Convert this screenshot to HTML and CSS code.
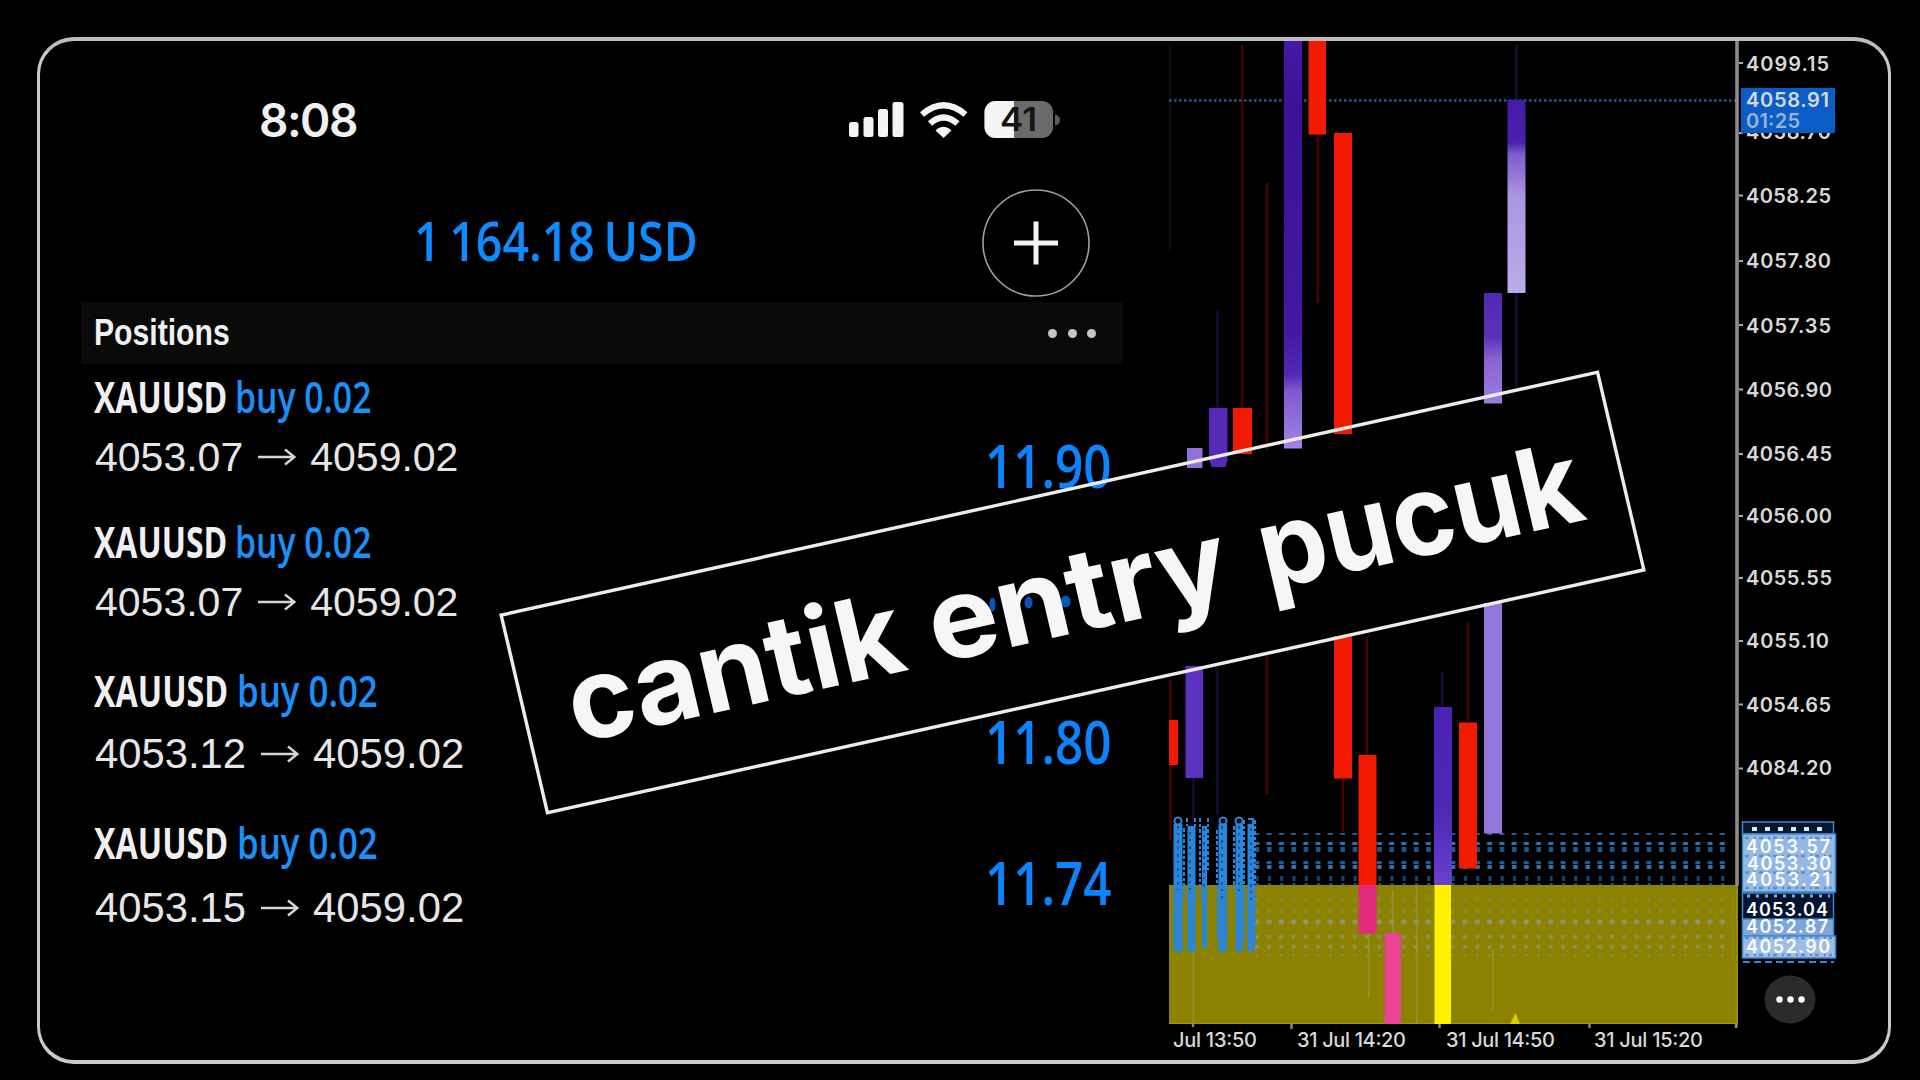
FILE: index.html
```html
<!DOCTYPE html>
<html lang="id">
<head>
<meta charset="utf-8">
<title>XAUUSD positions</title>
<link rel="stylesheet" href="styles.css">
</head>
<body>
<main class="frame">
  <section class="account">
    <div class="status">
      <span class="clock">8:08</span>
      <svg class="indicators" width="216" height="44" viewBox="848 98 216 44">
        <g fill="#f4f4f4">
          <rect x="849" y="122" width="9.5" height="15" rx="2.5"/>
          <rect x="863.5" y="117" width="10" height="20" rx="2.5"/>
          <rect x="878" y="109" width="10" height="28" rx="2.5"/>
          <rect x="892.5" y="102" width="11" height="35" rx="2.5"/>
          <path d="M935.5 130.5Q943.500 123 951.500 130.500L943.500 138Z"/>
        </g>
        <g fill="none" stroke="#f4f4f4" stroke-width="6.200">
          <path d="M922 114.500Q943.500 96 965.500 114.500"/>
          <path d="M930 123.500Q943.500 111.500 957.500 123.500"/>
        </g>
        <rect x="984.5" y="101" width="68.500" height="37" rx="11" fill="#6b6b6b"/>
        <path d="M1014 101H995.500A11 11 0 0 0 984.500 112V127A11 11 0 0 0 995.500 138H1014Z" fill="#f4f4f4"/>
        <path d="M1055 114.500Q1060 115.500 1060 120T1055 125.500Z" fill="#5c5c5c"/>
        <text x="1000" y="131" class="charge" textLength="37" lengthAdjust="spacingAndGlyphs">41</text>
      </svg>
    </div>

    <div class="balance">
      <span class="total">1 164.18 USD</span>
      <svg class="add" width="112" height="112" viewBox="-56 -56 112 112">
        <circle r="53" fill="none" stroke="#a0a0a0" stroke-width="1.600"/>
        <path d="M-22 0H22M0-21.500V21.500" stroke="#f4f4f4" stroke-width="5"/>
      </svg>
    </div>

    <header class="bar">
      <h1>Positions</h1>
      <span class="dots"><i></i><i></i><i></i></span>
    </header>

    <ul class="positions">
      <li class="position first">
        <div class="deal"><b>XAUUSD</b><em>buy 0.02</em></div>
        <div class="prices"><span>4053.07</span><svg width="38" height="18" viewBox="0 0 38 18"><path d="M0 9H36M27 1.500L36.500 9L27 16.500"/></svg><span>4059.02</span></div>
        <strong class="profit">11.90</strong>
      </li>
      <li class="position second">
        <div class="deal"><b>XAUUSD</b><em>buy 0.02</em></div>
        <div class="prices"><span>4053.07</span><svg width="38" height="18" viewBox="0 0 38 18"><path d="M0 9H36M27 1.500L36.500 9L27 16.500"/></svg><span>4059.02</span></div>
      </li>
      <li class="position third">
        <div class="deal"><b>XAUUSD</b><em>buy 0.02</em></div>
        <div class="prices"><span>4053.12</span><svg width="38" height="18" viewBox="0 0 38 18"><path d="M0 9H36M27 1.500L36.500 9L27 16.500"/></svg><span>4059.02</span></div>
        <strong class="profit">11.80</strong>
      </li>
      <li class="position fourth">
        <div class="deal"><b>XAUUSD</b><em>buy 0.02</em></div>
        <div class="prices"><span>4053.15</span><svg width="38" height="18" viewBox="0 0 38 18"><path d="M0 9H36M27 1.500L36.500 9L27 16.500"/></svg><span>4059.02</span></div>
        <strong class="profit">11.74</strong>
      </li>
    </ul>
  </section>

  <svg class="chart" width="749" height="1019" viewBox="1140 41 749 1019">
    <defs>
      <linearGradient id="tall" gradientUnits="userSpaceOnUse" x1="0" y1="41" x2="0" y2="448">
        <stop offset="0" stop-color="#4519a6"/><stop offset=".17" stop-color="#3a1294"/><stop offset=".72" stop-color="#4319a4"/><stop offset=".82" stop-color="#5229b8"/><stop offset=".86" stop-color="#8059ce"/><stop offset="1" stop-color="#a084e6"/>
      </linearGradient>
      <linearGradient id="last" gradientUnits="userSpaceOnUse" x1="0" y1="100" x2="0" y2="293">
        <stop offset="0" stop-color="#451ba4"/><stop offset=".22" stop-color="#4a1fae"/><stop offset=".28" stop-color="#7d5ccc"/><stop offset=".5" stop-color="#ab96e0"/><stop offset="1" stop-color="#bbabe8"/>
      </linearGradient>
      <linearGradient id="mid" gradientUnits="userSpaceOnUse" x1="0" y1="293" x2="0" y2="404">
        <stop offset="0" stop-color="#5227b2"/><stop offset=".4" stop-color="#5b33ba"/><stop offset=".6" stop-color="#8765d0"/><stop offset="1" stop-color="#9b7de2"/>
      </linearGradient>
      <linearGradient id="low" x1="0" y1="0" x2="0" y2="1">
        <stop offset="0" stop-color="#4b22b4"/><stop offset=".6" stop-color="#4f28b6"/><stop offset="1" stop-color="#6840cc"/>
      </linearGradient>
      <pattern id="levels" patternUnits="userSpaceOnUse" x="1265" y="830" width="12.250" height="56">
        <g fill="#2674ba">
          <rect x="1.500" y="3" width="5" height="2" opacity=".8"/><rect x="1.500" y="12" width="5" height="3"/><rect x="2" y="17" width="4.500" height="5" opacity=".75"/>
          <rect x="1.500" y="31" width="5" height="3" opacity=".8"/><rect x="2" y="35" width="4.500" height="4"/><rect x="3" y="46" width="3" height="5" opacity=".6"/><rect x="3" y="53" width="3" height="2" opacity=".7"/>
        </g>
      </pattern>
      <pattern id="levels-zone" patternUnits="userSpaceOnUse" x="1265" y="886" width="12.250" height="74">
        <g fill="#8d9468">
          <circle cx="4" cy="13" r="2" opacity=".4"/><circle cx="4" cy="25" r="2" opacity=".5"/><circle cx="4" cy="36" r="2.700"/><circle cx="4" cy="51" r="2.300" opacity=".8"/><circle cx="4" cy="61" r="2.300" opacity=".8"/><circle cx="4" cy="69" r="1.600" opacity=".6"/>
        </g>
      </pattern>
    </defs>

    <!-- price zone -->
    <rect x="1169" y="885" width="569" height="139" fill="#8a8200"/>
    <path d="M1169 1023.500H1738" stroke="#a39b00" stroke-width="1"/>
    <rect x="1253" y="830" width="477" height="55" fill="url(#levels)"/>
    <rect x="1253" y="886" width="477" height="73" fill="url(#levels-zone)"/>

    <!-- wicks -->
    <g stroke-width="2.500">
      <path stroke="#0c0c0c" d="M1170 45V250"/>
      <path stroke="#4a0300" d="M1242 45V408M1267 183V450M1267 655V794M1318 134V303M1170.500 680V840M1343 778V832M1367 637V755M1468 622V722"/>
      <path stroke="#170d3a" d="M1217.500 311V408M1217.500 668V815M1516.500 44V100M1516.500 293V392M1193.500 778V820M1442 672V707"/>
      <path stroke="#9a953c" stroke-width="2" opacity=".7" d="M1193.500 951V1023M1369 933V998M1417 886V1023M1493 950V1010M1393 890V933"/>
    </g>

    <path d="M1169 100.500H1736" stroke="#1d5d9c" stroke-width="2.500" stroke-dasharray="2.500 2.500"/>

    <!-- candles -->
    <g fill="#f21a00">
      <rect x="1233" y="408" width="19" height="46"/>
      <rect x="1308.500" y="41" width="17.500" height="93.500"/>
      <rect x="1334" y="133" width="18" height="301"/>
      <rect x="1334" y="636" width="18" height="142.500"/>
      <rect x="1169" y="720" width="9" height="45"/>
      <rect x="1358.500" y="755" width="18" height="130"/>
      <rect x="1459" y="722.500" width="18" height="146"/>
    </g>
    <rect x="1358.500" y="885" width="18" height="48.500" fill="#e22a7c"/>
    <rect x="1384.500" y="933" width="16.500" height="91" fill="#ec4494"/>
    <rect x="1187" y="448" width="15.500" height="20" fill="#9270da"/>
    <rect x="1185.500" y="666" width="17.500" height="112" fill="#5c32c0"/>
    <path d="M1209 408H1227.500V460L1225.500 467H1212L1209 460Z" fill="#5729b8"/>
    <rect x="1284" y="41" width="18" height="407.500" fill="url(#tall)"/>
    <rect x="1434" y="707" width="18" height="178" fill="url(#low)"/>
    <rect x="1434.500" y="885" width="16.500" height="139" fill="#fff200"/>
    <rect x="1484" y="293" width="18" height="110.500" fill="url(#mid)"/>
    <rect x="1484" y="603" width="18" height="230.500" fill="#9476dc"/>
    <rect x="1507.500" y="100" width="18" height="193" fill="url(#last)"/>
    <path d="M1510 1024L1515.500 1013L1520 1024Z" fill="#d8d000"/>

    <!-- stacked order labels -->
    <g fill="#2a86da">
      <rect x="1173.500" y="824" width="9" height="127.500"/><rect x="1187.500" y="826" width="8" height="125.500"/><rect x="1202" y="826" width="5" height="122"/>
      <rect x="1218.500" y="824" width="8.500" height="127.500"/><rect x="1235.500" y="824" width="7.500" height="127.500"/><rect x="1247.500" y="824" width="6.500" height="127.500"/>
    </g>
    <g fill="none" stroke="#2a86da" stroke-width="2">
      <circle cx="1178" cy="821" r="3.500"/><circle cx="1223" cy="821" r="3.500"/><circle cx="1239" cy="821" r="3.500"/>
      <path stroke-dasharray="4 2 3 2" d="M1184 828V900M1187 818V826M1195 818V826M1200 818V900M1208 818V870M1217 830V940M1234 826V890M1244 820V940M1255 820V945"/>
      <path d="M1248 819H1253V824"/>
    </g>
    <g fill="none" stroke="#0e2c52" stroke-width="1.500" stroke-dasharray="3 4 2 5" opacity=".7">
      <path d="M1178 826V890M1190 832V890M1204 828V890M1222 826V900M1239 826V895M1251 828V900"/>
    </g>

    <!-- axes -->
    <path d="M1737 41V886" stroke="#8c8c8c" stroke-width="3.600"/>
    <path d="M1737 886V1027" stroke="#9a9300" stroke-width="1.500"/>
    <path d="M1739 63H1743M1739 133H1743M1739 195.500H1743M1739 261H1743M1739 325H1743M1739 389.500H1743M1739 454H1743M1739 516H1743M1739 578H1743M1739 641H1743M1739 704.500H1743M1739 768.500H1743" stroke="#aaa" stroke-width="2"/>
    <path d="M1193 1024V1027M1291.500 1024V1029M1439.500 1024V1028M1589.500 1024V1028M1736 1024V1028" stroke="#888" stroke-width="2.500"/>

    <g class="axis">
      <text x="1746" y="70.500" textLength="83">4099.15</text>
      <text x="1746" y="138.500" textLength="85">4058.70</text>
      <text x="1746" y="203" textLength="85">4058.25</text>
      <text x="1746" y="268" textLength="85">4057.80</text>
      <text x="1746" y="332.500" textLength="85">4057.35</text>
      <text x="1746" y="396.500" textLength="86">4056.90</text>
      <text x="1746" y="460.500" textLength="86">4056.45</text>
      <text x="1746" y="523" textLength="86">4056.00</text>
      <text x="1746" y="585" textLength="86">4055.55</text>
      <text x="1746" y="648" textLength="83">4055.10</text>
      <text x="1746" y="711.500" textLength="85">4054.65</text>
      <text x="1746" y="775" textLength="86">4084.20</text>
    </g>
    <g class="axis dates">
      <text x="1173" y="1047" textLength="84">Jul 13:50</text>
      <text x="1297" y="1047" textLength="109">31 Jul 14:20</text>
      <text x="1446" y="1047" textLength="109">31 Jul 14:50</text>
      <text x="1594" y="1047" textLength="109">31 Jul 15:20</text>
    </g>

    <!-- current price -->
    <rect x="1741" y="88" width="94" height="45" fill="#0a5cc6"/>
    <g class="axis">
      <text x="1746" y="106.500" textLength="83">4058.91</text>
      <text x="1746" y="127.500" textLength="54" opacity=".7">01:25</text>
    </g>

    <!-- piled order price tags -->
    <g stroke="#3a86d0" stroke-width="1.500">
      <rect x="1742.500" y="822" width="91" height="12" fill="#051830"/>
      <rect x="1742.500" y="893" width="91" height="28" fill="#04142c"/>
      <rect x="1742.500" y="834" width="93" height="58" fill="#94b8e2"/>
      <rect x="1742.500" y="919" width="91" height="17" fill="#7ea6d8"/>
      <rect x="1742.500" y="936" width="93" height="22" fill="#9dbde6"/>
    </g>
    <path d="M1743 962H1834" stroke="#3a86d0" stroke-width="2" stroke-dasharray="7 4"/>
    <path d="M1752 829H1830" stroke="#dce9fa" stroke-width="4" stroke-dasharray="5 8"/>
    <path d="M1747 896H1830" stroke="#78a7df" stroke-width="3" stroke-dasharray="3 6"/>
    <path d="M1745 856H1832M1745 872.500H1832M1745 838H1832M1745 888H1832M1745 938H1832M1745 955H1832" stroke="#4b85c9" stroke-width="2.500" stroke-dasharray="4 5 2 3" opacity=".8"/>
    <g class="axis pile">
      <text x="1746" y="853" textLength="84">4053.57</text>
      <text x="1747" y="869.500" textLength="84">4053.30</text>
      <text x="1746" y="886" textLength="84">4053.21</text>
      <text x="1746" y="916" textLength="82">4053.04</text>
      <text x="1746" y="932.500" textLength="82">4052.87</text>
      <text x="1746" y="953" textLength="84">4052.90</text>
    </g>

    <ellipse cx="1790" cy="999.500" rx="25.500" ry="24" fill="#2b2b2b"/>
    <g fill="#fff"><circle cx="1779.500" cy="999.500" r="3.200"/><circle cx="1790.500" cy="999.500" r="3.200"/><circle cx="1801.500" cy="999.500" r="3.200"/></g>
  </svg>

  <svg class="stamp" width="1127" height="207" viewBox="-563.500 -103.500 1127 207">
    <rect x="-561.500" y="-101.500" width="1123" height="203" fill="none" stroke="#ececec" stroke-width="3.400"/>
    <g fill="#0757b8" transform="rotate(12.500)">
      <ellipse cx="-80" cy="12" rx="3" ry="7"/><ellipse cx="-44" cy="10" rx="4" ry="6"/><ellipse cx="-7" cy="9" rx="5" ry="6"/><ellipse cx="22" cy="8" rx="3" ry="4" opacity=".6"/>
    </g>
    <text x="-517" y="40" textLength="341" lengthAdjust="spacingAndGlyphs">cantik</text>
    <text x="-148" y="40" textLength="305" lengthAdjust="spacingAndGlyphs">entry</text>
    <text x="191" y="40" textLength="328" lengthAdjust="spacingAndGlyphs">pucuk</text>
  </svg>
</main>
</body>
</html>
```

FILE: styles.css
```css
* { box-sizing: border-box; }

body {
  margin: 0;
  padding: 37px;
  width: 1920px;
  height: 1080px;
  overflow: hidden;
  background: #000;
  color: #f0f0f0;
  font-family: "Open Sans", "Noto Sans", sans-serif;
}

.frame {
  position: relative;
  display: grid;
  grid-template-columns: 1100px 748px;
  width: 1854px;
  height: 1027px;
  border: 3px solid #c9cbc9;
  border-top: 4px solid #b7bfb8;
  border-bottom-width: 4px;
  border-radius: 37px;
  overflow: hidden;
}

.account { padding: 39px 17px 0 41px; }

.status {
  display: flex;
  align-items: center;
  height: 80px;
  padding-left: 178px;
}

.clock {
  width: 589px;
  font: 600 46px/80px Inter, sans-serif;
  letter-spacing: -1.5px;
}

.charge { font: 600 32px Inter, sans-serif; fill: #151515; }

.balance {
  display: flex;
  align-items: flex-start;
  height: 142px;
  padding: 27px 0 0 333px;
}

.total {
  width: 566px;
  color: #0d8bff;
  font-size: 54.5px;
  font-weight: 650;
  line-height: 106px;
  white-space: nowrap;
  word-spacing: -4px;
  transform: scaleX(.853);
  transform-origin: left;
}

.add { flex: none; }

.bar {
  display: flex;
  align-items: center;
  justify-content: space-between;
  height: 62px;
  padding: 0 27px 0 13px;
  background: #0a0a0a;
}

.bar h1 {
  margin: 0;
  font: 700 37px/62px "Liberation Sans", Arial, sans-serif;
  transform: scaleX(.815);
  transform-origin: left;
}

.dots { display: flex; gap: 10.500px; }
.dots i { width: 9px; height: 9px; border-radius: 50%; background: #c6c6c6; }

.positions { margin: 0; padding: 2px 0 0 13px; list-style: none; }

.position {
  display: grid;
  grid-template-columns: 891px 138px;
  grid-template-rows: 60px 60px;
  height: 144.500px;
}

.second { height: 150px; }
.third { height: 152px; }

.deal {
  display: flex;
  padding-top: 1px;
  font-size: 43px;
  font-weight: 600;
  line-height: 60px;
  white-space: nowrap;
}

.deal b { width: 141px; font-weight: 700; transform: scaleX(.745); transform-origin: left; }
.deal em { font-style: normal; font-weight: 650; color: #1a90f8; transform: scaleX(.785); transform-origin: left; }
.third b, .fourth b { width: 142.5px; transform: scaleX(.75); }
.third em, .fourth em { transform: scaleX(.81); }
.third .deal, .fourth .deal { padding-top: 0; }

.prices {
  grid-row: 2;
  display: flex;
  align-items: center;
  gap: 14.500px;
  padding: 2px 0 0 1px;
  font: 41px/60px "Liberation Sans", Arial, sans-serif;
  color: #e6e6e6;
}

.prices svg { fill: none; stroke: #d6d6d6; stroke-width: 2.400; }
.third .prices, .fourth .prices { font-size: 41.8px; }
.third .prices { padding-top: 6px; }
.fourth .prices { padding-top: 11px; }

.profit {
  grid-column: 2;
  grid-row: 1 / 3;
  padding-top: 69px;
  color: #0a85ff;
  font-size: 60px;
  font-weight: 650;
  line-height: 60px;
  transform: scaleX(.823);
  transform-origin: left;
}

.third .profit { padding-top: 50px; }
.fourth .profit { padding-top: 39px; }

.chart { display: block; }

.axis { font: 600 20px Inter, sans-serif; fill: #d8d8d8; }
.dates { font-weight: 500; }
.pile { font-size: 18px; fill: #fbfcff; }

/* caption laid over the whole screen */
.stamp {
  position: absolute;
  left: 468.800px;
  top: 447.800px;
  transform: matrix(.9763, -.2163, .2280, .9737, 0, 0);
  overflow: visible;
}

.stamp text { font: 650 113px Inter, sans-serif; fill: #f6f6f6; }
```
